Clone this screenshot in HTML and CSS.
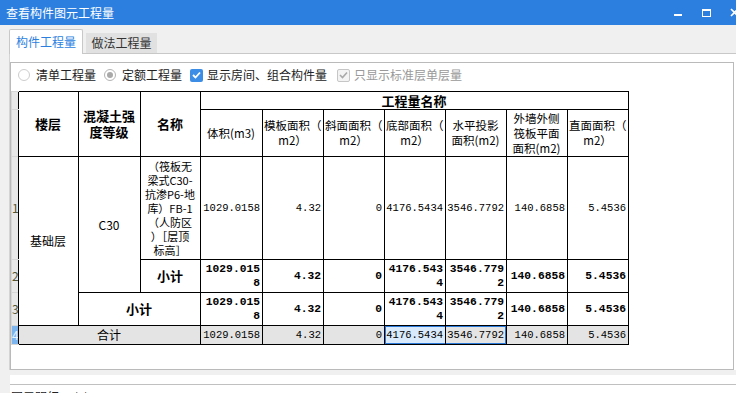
FILE: index.html
```html
<!DOCTYPE html>
<html lang="zh-CN">
<head>
    <meta charset="UTF-8">
    <title>查看构件图元工程量</title>
    <link rel="stylesheet" href="styles.css">
</head>
<body>

    <header class="titlebar">
        <span class="title">查看构件图元工程量</span>
        <div class="controls">
            <span class="ctl"><svg width="8" height="8" viewBox="0 0 8 8"><rect x="0" y="5" width="8" height="2" fill="#fff"/></svg></span>
            <span class="ctl"><svg width="9" height="8" viewBox="0 0 9 8"><rect x="0.5" y="1" width="8" height="6.5" fill="none" stroke="#fff" stroke-width="1"/><rect x="0" y="0" width="9" height="2" fill="#fff"/></svg></span>
            <span class="ctl"><svg width="9" height="9" viewBox="0 0 9 9"><path d="M1 1 L8 8 M8 1 L1 8" stroke="#fff" stroke-width="1.6"/></svg></span>
        </div>
    </header>

    <nav class="tabs">
        <a class="tab active">构件工程量</a>
        <a class="tab">做法工程量</a>
    </nav>

    <section class="pane">
        <div class="panel">
            <div class="options">
                <label class="opt"><span class="radio"></span>清单工程量</label>
                <label class="opt"><span class="radio on"></span>定额工程量</label>
                <label class="opt wide"><span class="check"><svg width="9" height="8" viewBox="0 0 9 8"><path d="M1 4 L3.5 6.5 L8 1.5" fill="none" stroke="#fff" stroke-width="1.8"/></svg></span>显示房间、组合构件量</label>
                <label class="opt off"><span class="check dis"><svg width="9" height="8" viewBox="0 0 9 8"><path d="M1 4 L3.5 6.5 L8 1.5" fill="none" stroke="#a8a8a8" stroke-width="1.6"/></svg></span>只显示标准层单层量</label>
            </div>

            <table class="grid">
                <colgroup>
                    <col class="c-rh">
                    <col class="c60"><col class="c62"><col class="c60"><col class="c62">
                    <col class="c61"><col class="c61"><col class="c61"><col class="c61"><col class="c61"><col class="c61">
                </colgroup>
                <tr class="h1">
                    <td class="rh"></td>
                    <th rowspan="2">楼层</th>
                    <th rowspan="2">混凝土强<br>度等级</th>
                    <th rowspan="2">名称</th>
                    <th colspan="7">工程量名称</th>
                </tr>
                <tr class="h2">
                    <td class="rh"></td>
                    <th class="sub">体积(m3)</th>
                    <th class="sub">模板面积（<br>m2）</th>
                    <th class="sub">斜面面积（<br>m2）</th>
                    <th class="sub">底部面积（<br>m2）</th>
                    <th class="sub">水平投影<br>面积(m2)</th>
                    <th class="sub">外墙外侧<br>筏板平面<br>面积(m2)</th>
                    <th class="sub">直面面积（<br>m2）</th>
                </tr>
                <tr class="r1">
                    <td class="rh">1</td>
                    <td rowspan="3" class="txt">基础层</td>
                    <td rowspan="2" class="txt">C30</td>
                    <td class="txt name">（筏板无<br>梁式C30-<br>抗渗P6-地<br>库）FB-1<br>（人防区<br>）［层顶<br>标高］</td>
                    <td class="num">1029.0158</td>
                    <td class="num">4.32</td>
                    <td class="num">0</td>
                    <td class="num">4176.5434</td>
                    <td class="num">3546.7792</td>
                    <td class="num">140.6858</td>
                    <td class="num">5.4536</td>
                </tr>
                <tr class="r2">
                    <td class="rh">2</td>
                    <td class="txt bold">小计</td>
                    <td class="num b">1029.0158</td>
                    <td class="num b">4.32</td>
                    <td class="num b">0</td>
                    <td class="num b">4176.5434</td>
                    <td class="num b">3546.7792</td>
                    <td class="num b">140.6858</td>
                    <td class="num b">5.4536</td>
                </tr>
                <tr class="r3">
                    <td class="rh">3</td>
                    <td colspan="2" class="txt bold">小计</td>
                    <td class="num b">1029.0158</td>
                    <td class="num b">4.32</td>
                    <td class="num b">0</td>
                    <td class="num b">4176.5434</td>
                    <td class="num b">3546.7792</td>
                    <td class="num b">140.6858</td>
                    <td class="num b">5.4536</td>
                </tr>
                <tr class="total">
                    <td class="rh cur">4</td>
                    <td colspan="3" class="txt">合计</td>
                    <td class="num">1029.0158</td>
                    <td class="num">4.32</td>
                    <td class="num">0</td>
                    <td class="num sel sel-l">4176.5434</td>
                    <td class="num sel-r">3546.7792</td>
                    <td class="num">140.6858</td>
                    <td class="num">5.4536</td>
                </tr>
            </table>
        </div>
    </section>

    <div class="splitter"></div>
    <div class="strip"></div>
    <div class="detail">图元明细&nbsp;&nbsp;1 (1)</div>

</body>
</html>
```

FILE: styles.css
```css
* {
    box-sizing: border-box;
}

body {
    margin: 0;
    width: 736px;
    height: 393px;
    overflow: hidden;
    background-color: #f0f0f0;
    font-family: "Noto Sans CJK SC", "Noto Sans", sans-serif;
    font-size: 12px;
    color: #222;
}

.titlebar {
    height: 25px;
    background-color: #2c7fdf;
    color: #fff;
    display: flex;
    align-items: center;
    justify-content: space-between;
    padding-left: 6px;
}

.title {
    font-size: 12px;
    line-height: 25px;
}

.controls {
    display: flex;
    margin-right: -12px;
}

.ctl {
    width: 28px;
    height: 25px;
    display: flex;
    align-items: center;
    justify-content: center;
}

.tabs {
    height: 28px;
    display: flex;
    align-items: flex-end;
    gap: 3px;
    padding-left: 9px;
}

.tab {
    display: flex;
    align-items: center;
    justify-content: center;
    width: 71px;
    height: 20px;
    background-color: #e1e1e1;
    color: #333;
    line-height: 1;
}

.tab.active {
    position: relative;
    z-index: 1;
    width: 74px;
    height: 25px;
    margin-bottom: -1px;
    background-color: #fff;
    border: 1px solid #c8c8c8;
    border-bottom: none;
    border-radius: 2px 2px 0 0;
    color: #2c7fdf;
}

.pane {
    margin-left: 9px;
    height: 317px;
    background-color: #fff;
    border-top: 1px solid #c8c8c8;
    border-left: 1px solid #d4d4d4;
    padding-top: 8px;
}

.panel {
    width: 724px;
    height: 308px;
    border: 1px solid #bababa;
}

.options {
    height: 24px;
    display: flex;
    align-items: center;
    padding-left: 7px;
    margin-bottom: 4px;
}

.opt {
    display: flex;
    align-items: center;
    gap: 6px;
    margin-right: 8px;
    line-height: 1;
}

.opt.wide {
    gap: 4px;
    margin-right: 10px;
}

.opt.off {
    gap: 4px;
    color: #999;
}

.radio {
    width: 12px;
    height: 12px;
    border-radius: 50%;
    border: 1px solid #cdcdcd;
    background-color: #fff;
    display: flex;
    align-items: center;
    justify-content: center;
}

.radio.on {
    border-color: #b4b4b4;
}

.radio.on::after {
    content: "";
    width: 6px;
    height: 6px;
    border-radius: 50%;
    background-color: #a9a9a9;
}

.check {
    width: 13px;
    height: 13px;
    border-radius: 2px;
    background-color: #3b8de6;
    display: flex;
    align-items: center;
    justify-content: center;
}

.check.dis {
    background-color: #f3f3f3;
    border: 1px solid #c6c6c6;
}

/* grid */
.grid {
    border-collapse: collapse;
    table-layout: fixed;
    width: 617px;
    color: #000;
}

.c-rh { width: 7px; }
.c60 { width: 60px; }
.c61 { width: 61px; }
.c62 { width: 62px; }

.grid th,
.grid td {
    border: 1px solid #000;
    padding: 0 2px 0 1px;
    line-height: 14px;
    overflow: hidden;
    vertical-align: middle;
}

.grid th {
    font-size: 13px;
    line-height: 16px;
    font-weight: bold;
    text-align: center;
}

.grid th.sub {
    font-size: 11.5px;
    line-height: 15px;
    font-weight: normal;
    white-space: nowrap;
}

.h1 { height: 18px; }
.h2 { height: 47px; }
.r1 { height: 103px; }
.r2,
.r3 { height: 33px; }
.total { height: 19px; }

.grid td.rh {
    border: 1px solid #d6d6d6;
    border-right: none;
    background-color: #e8e8e8;
    color: #553;
    padding: 0;
    white-space: nowrap;
    font-size: 12px;
}

.grid td.rh.cur {
    background-color: #7db5ef;
    color: #eaf4ff;
}

.txt {
    text-align: center;
    font-size: 12px;
}

.grid td.name {
    white-space: nowrap;
    font-size: 11px;
}

.bold {
    font-weight: bold;
    font-size: 13px;
}

.num {
    text-align: right;
    font-family: "Liberation Mono", monospace;
    font-size: 10.5px;
    white-space: nowrap;
}

.num.b {
    font-weight: bold;
    font-size: 11.3px;
    white-space: normal;
    word-break: break-all;
}

.total td {
    background-color: #e4e4e4;
}

.grid td.sel {
    background-color: #d8eafc;
}

.sel-l,
.sel-r {
    position: relative;
}

.sel-l::after,
.sel-r::after {
    content: "";
    position: absolute;
    top: -1px;
    bottom: -1px;
    border: 2px solid #2b7ad9;
}

.sel-l::after {
    left: -1px;
    right: 0;
    border-right: none;
}

.sel-r::after {
    left: 0;
    right: -1px;
    border-left: none;
}

.splitter {
    height: 5px;
}

.strip {
    margin-left: 10px;
    height: 10px;
    background-color: #fff;
    border-bottom: 1px solid #c0c0c0;
}

.detail {
    margin-left: 10px;
    height: 20px;
    background-color: #fff;
    padding: 3px 0 0 1px;
    color: #222;
}
```
